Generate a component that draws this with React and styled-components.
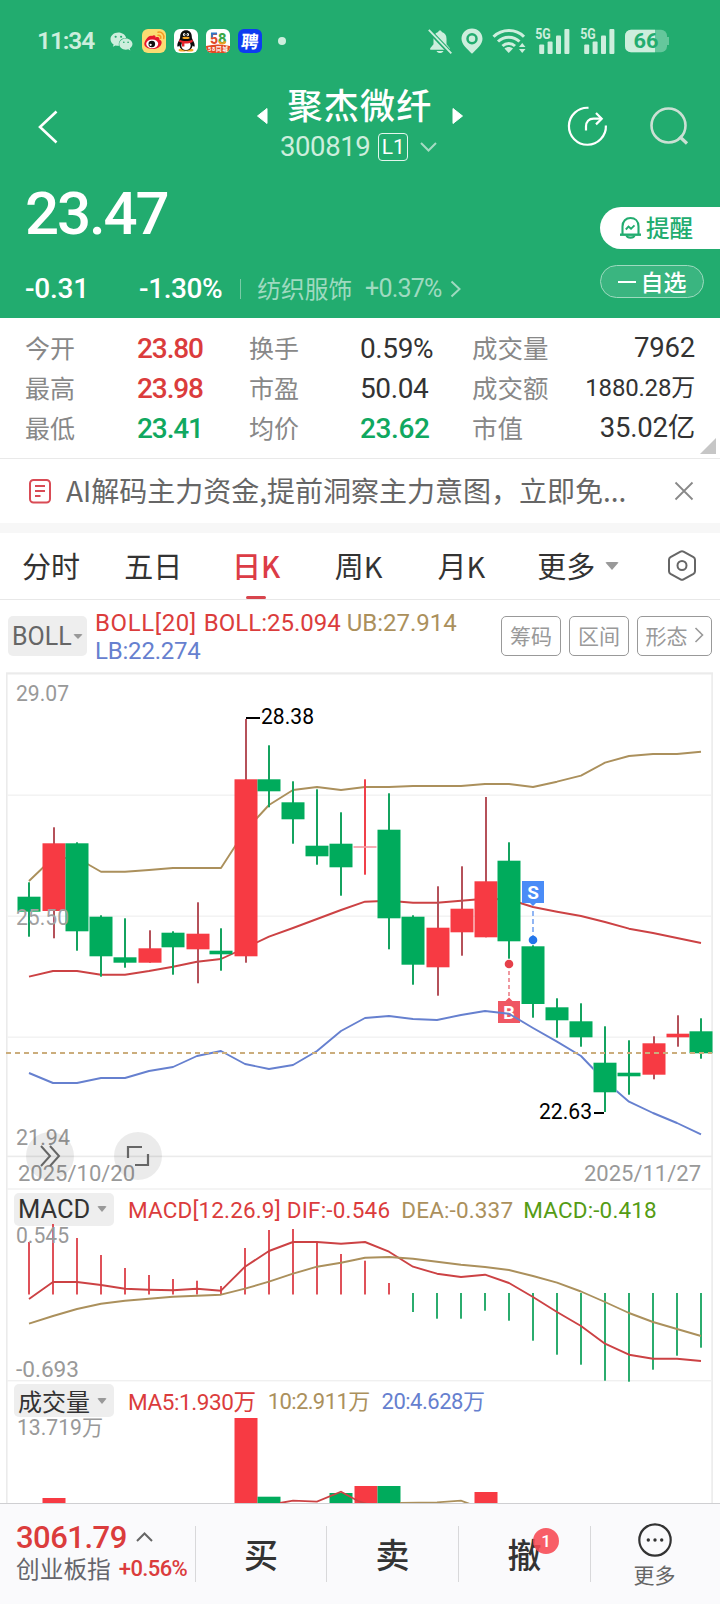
import React from 'react';
import styled, { createGlobalStyle } from 'styled-components';
import { FaWeixin } from 'react-icons/fa';

const GREEN = '#22ac6f';
const UP = '#f73a43';
const DOWN = '#00ab5c';
const RED = '#db3c3c';
const GOLD = '#ab905c';
const BLUE = '#6680cf';
const FONT = 'Roboto, "Noto Sans CJK SC", sans-serif';
const CJK = '"Noto Sans CJK SC", sans-serif';

const GlobalStyle = createGlobalStyle`
    * {
        box-sizing: border-box;
    }
    body {
        margin: 0;
        background: #fff;
        font-family: ${FONT};
        color: #333;
    }
    svg {
        display: block;
        flex: none;
    }
`;

const Screen = styled.div`
    width: 720px;
    height: 1604px;
    display: flex;
    flex-direction: column;
    overflow: hidden;
`;

const Text = styled.span`
    font-size: ${props => props.size}px;
    font-weight: ${props => props.weight || 400};
    color: ${props => props.color || 'inherit'};
    letter-spacing: ${props => props.spacing || 0}px;
    margin-left: ${props => props.left || 0}px;
    padding-top: ${props => props.drop || 0}px;
    font-family: ${props => (props.cjk ? CJK : 'inherit')};
    line-height: 1;
    white-space: pre;
`;

/* ---------- header ---------- */

const Header = styled.header`
    height: 318px;
    flex: none;
    background: ${GREEN};
    color: #fff;
`;

const StatusBar = styled.div`
    height: 82px;
    padding: 0 51px 0 37px;
    display: flex;
    align-items: center;
    justify-content: space-between;
    color: #cdeedd;
`;

const StatusGroup = styled.div`
    display: flex;
    align-items: center;
    gap: ${props => props.gap}px;
`;

const WechatIcon = styled(FaWeixin)`
    margin: 0 1px 0 8px;
`;

const AppIcon = styled.div`
    width: 24px;
    height: 24px;
    border-radius: 6px;
    overflow: hidden;
    background: ${props => props.bg};
`;

const Dot = styled.div`
    width: 8px;
    height: 8px;
    border-radius: 50%;
    background: #cdeedd;
    margin-left: 8px;
`;

const TitleBar = styled.div`
    height: 84px;
    display: grid;
    grid-template-columns: 240px 1fr 240px;
    align-items: center;
`;

const BackButton = styled.div`
    padding: 6px 0 0 37px;
`;

const StockTitle = styled.div`
    display: flex;
    flex-direction: column;
`;

const StockName = styled.div`
    height: 46px;
    display: flex;
    align-items: flex-start;
    justify-content: space-between;
    padding: 0 16px;

    svg {
        margin-top: 23px;
    }
`;

const StockCode = styled.div`
    height: 34px;
    display: flex;
    align-items: center;
    padding-left: 40px;
`;

const LevelTag = styled.div`
    width: 30px;
    height: 28px;
    margin: 0 12px 0 8px;
    border: 1.5px solid #e4f6ed;
    border-radius: 4px;
    display: flex;
    align-items: center;
    justify-content: center;
`;

const HeaderActions = styled.div`
    display: flex;
    gap: 42px;
    padding: 4px 0 0 86px;
`;

const Quote = styled.div`
    height: 152px;
    display: grid;
    grid-template-columns: 1fr 120px;
`;

const Price = styled.div`
    height: 95px;
    padding-left: 25px;
    display: flex;
    align-items: center;
`;

const Change = styled.div`
    height: 55px;
    padding-left: 25px;
    display: flex;
    align-items: center;
`;

const Divider = styled.div`
    width: 1px;
    height: 20px;
    margin: 0 16px 0 18px;
    background: #79cba6;
`;

const Actions = styled.div`
    display: flex;
    flex-direction: column;
    padding-top: 41px;
    gap: 16px;
`;

const RemindButton = styled.div`
    height: 42px;
    border-radius: 21px 0 0 21px;
    background: #fff;
    color: ${GREEN};
    display: flex;
    align-items: center;
    gap: 4px;
    padding-left: 19px;
`;

const WatchButton = styled.div`
    width: 104px;
    height: 33px;
    border-radius: 17px;
    border: 1.3px solid #9edabf;
    background: #3ab580;
    display: flex;
    align-items: center;
    justify-content: center;
    gap: 5px;
`;

const Minus = styled.div`
    width: 18px;
    height: 2px;
    background: #fff;
`;

/* ---------- stats and banner ---------- */

const Stats = styled.section`
    height: 141px;
    flex: none;
    position: relative;
    padding: 10px 25px 10px;
    border-bottom: 1px solid #e9e9e9;
    display: grid;
    grid-template-columns: 112px 112px 111px 112px 1fr;
    grid-auto-rows: 40px;
    align-items: center;
`;

const StatLabel = styled(Text)`
    font-family: ${CJK};
    color: #888;
    padding-bottom: 2px;
`;

const StatValue = styled(Text)`
    padding-top: 1px;
`;

const LastStat = styled.div`
    display: flex;
    align-items: center;
    justify-content: space-between;
`;

const Corner = styled.div`
    position: absolute;
    right: 4px;
    bottom: 4px;
    border-style: solid;
    border-width: 0 0 16px 16px;
    border-color: transparent transparent #c6c6c6 transparent;
`;

const Banner = styled.section`
    height: 64px;
    flex: none;
    display: flex;
    align-items: center;
    padding: 0 26px 0 28px;
`;

const BannerText = styled(Text)`
    flex: 1;
    margin-left: 14px;
    padding-bottom: 2px;
`;

const Gap = styled.div`
    height: 10px;
    flex: none;
    background: #f7f7f7;
`;

/* ---------- tabs ---------- */

const Tabs = styled.nav`
    height: 67px;
    flex: none;
    display: flex;
    border-bottom: 1.5px solid #e8e8e8;
`;

const Tab = styled.div`
    width: ${props => props.w || 102.7}px;
    flex: none;
    display: flex;
    flex-direction: column;
    align-items: center;
    color: ${props => (props.active ? '#dc3c46' : '#333')};

    &:first-child {
        width: 102px;
    }

    &::after {
        content: '';
        width: 20px;
        height: 3px;
        border-radius: 2px;
        background: ${props => (props.active ? '#d8454d' : 'transparent')};
    }
`;

const TabLabel = styled.div`
    height: 63px;
    display: flex;
    align-items: center;
    gap: 10px;
    padding-top: 2px;
`;

const Triangle = styled.div`
    border-style: solid;
    border-width: ${props => props.s * 1.15}px ${props => props.s}px 0;
    border-color: #999 transparent transparent;
    border-radius: 2px;
`;

/* ---------- indicators ---------- */

const BollBar = styled.div`
    height: 72px;
    flex: none;
    display: flex;
    align-items: center;
    padding: 0 8px 0 8px;
`;

const Chip = styled.div`
    width: ${props => props.w}px;
    height: ${props => props.h}px;
    flex: none;
    border-radius: 5px;
    background: #eee;
    display: flex;
    align-items: center;
    justify-content: space-between;
    padding: 0 ${props => props.pr}px 0 4px;
`;

const Legend = styled.div`
    flex: 1;
    margin-left: 8px;
    align-self: flex-start;
    padding-top: 9px;
`;

const LegendLine = styled.div`
    display: flex;
    align-items: center;
    height: 28px;
`;

const ToolButton = styled.div`
    height: 40px;
    width: ${props => props.w}px;
    margin-left: ${props => props.ml || 0}px;
    padding-bottom: 2px;
    border: 1px solid #999;
    border-radius: 5px;
    color: #999;
    display: flex;
    align-items: center;
    justify-content: center;
    gap: 6px;
`;

/* ---------- charts ---------- */

const Charts = styled.section`
    flex: 1;
    min-height: 0;
    overflow: hidden;
    position: relative;
`;

const DateRow = styled.div`
    height: 32px;
    display: flex;
    align-items: center;
    justify-content: space-between;
    padding: 2px 19px 0 18px;
    color: #999;
`;

const PanelHead = styled.div`
    height: ${props => props.h}px;
    display: flex;
    align-items: center;
    padding: 3px 0 0 14px;
`;

const RoundButton = styled.div`
    position: absolute;
    left: ${props => props.x}px;
    top: 460px;
    width: 48px;
    height: 48px;
    border-radius: 50%;
    background: rgba(0, 0, 0, 0.08);
    display: flex;
    align-items: center;
    justify-content: center;
`;

const Chart = styled.svg`
    overflow: visible;
    font-family: ${FONT};
`;

/* ---------- bottom bar ---------- */

const BottomBar = styled.footer`
    height: 101px;
    flex: none;
    border-top: 1px solid #cfcfd2;
    background: #fafafc;
    display: flex;
    padding-top: 16px;
`;

const IndexBox = styled.div`
    width: 195px;
    padding-left: 16px;
`;

const IndexRow = styled.div`
    display: flex;
    align-items: center;
    height: ${props => props.h}px;
`;

const TradeButton = styled.div`
    width: ${props => props.w}px;
    height: 56px;
    margin-top: 6px;
    border-left: 1.5px solid #d8d8da;
    display: flex;
    align-items: center;
    justify-content: center;
    position: relative;
`;

const Badge = styled.div`
    position: absolute;
    left: 74px;
    top: 2px;
    width: 26px;
    height: 26px;
    border-radius: 50%;
    background: rgba(247, 72, 82, 0.88);
    color: #fff;
    display: flex;
    align-items: center;
    justify-content: center;
`;

const MoreButton = styled.div`
    flex: 1;
    height: 56px;
    margin-top: 6px;
    padding-right: 2px;
    border-left: 1.5px solid #d8d8da;
    display: flex;
    flex-direction: column;
    align-items: center;
    gap: 7px;

    svg {
        margin-top: -3px;
    }
`;

/* [kind, high, body top, body bottom, low], kind 2 is an unchanged close */
const candles = [
    [0, 882.3, 896.7, 911.7, 936.7],
    [1, 827.3, 843.3, 911, 938.3],
    [0, 842.3, 843.3, 931.3, 950.7],
    [0, 915.3, 916.7, 956.3, 976.7],
    [0, 918.3, 957.3, 962.7, 967.7],
    [1, 930.3, 948.3, 962.7, 962.7],
    [0, 931.3, 932.7, 947.3, 974.7],
    [1, 902.3, 933.7, 949.3, 983.3],
    [0, 928.3, 950.7, 954.3, 970.7],
    [1, 719, 779.3, 956.3, 962.7],
    [0, 745.3, 779.3, 791.3, 807.3],
    [0, 781.3, 802.3, 819.3, 843.7],
    [0, 789.3, 845.7, 856.3, 864.7],
    [0, 812.3, 843.7, 867.3, 895.7],
    [2, 779.3, 846.2, 847.8, 874.7],
    [0, 793.3, 829.7, 918.3, 949.3],
    [0, 915.3, 916.7, 964.7, 984.7],
    [1, 886.3, 927.7, 967.3, 995.7],
    [1, 866.3, 908.7, 932.3, 955.7],
    [1, 797, 881.3, 937.3, 937.3],
    [0, 842.3, 860.7, 941.3, 958.7],
    [0, 945.3, 946.3, 1004, 1017.7],
    [0, 998.3, 1007.3, 1020.3, 1037.7],
    [0, 1003.3, 1021.3, 1037.3, 1046.7],
    [0, 1026.3, 1062.7, 1092.3, 1112],
    [0, 1040.3, 1072.7, 1076.3, 1094.7],
    [1, 1036.3, 1043.3, 1074.7, 1079.3],
    [1, 1015.3, 1033.7, 1037.3, 1046.7],
    [0, 1018.3, 1031.3, 1053.3, 1058.7]
];

const upper = [
    881, 858, 858, 871.7, 871.7, 870, 868, 868, 868, 831, 805, 790, 787, 790,
    787, 787, 786, 786, 786, 784, 784, 787, 781.7, 775.7, 762.7, 756, 754, 754,
    751.7
];
const middle = [
    976.7, 971, 971, 974.7, 974.7, 971, 966.7, 961.7, 959, 948, 936.7, 928, 919,
    910, 901.7, 900.7, 902.7, 902.7, 900.7, 898.7, 899.5, 907, 911.7, 916, 922,
    928.7, 933, 938, 943
];
const lower = [
    1073, 1083, 1083, 1078, 1078, 1071, 1067, 1056, 1051, 1064, 1069, 1065,
    1051, 1031, 1018, 1016, 1019, 1020, 1015, 1011, 1013.7, 1028, 1041.7, 1056,
    1081, 1101.7, 1113, 1123, 1134.3
];
const macdBars = [
    1242, 1224, 1238, 1255, 1268, 1275, 1279, 1280.7, 1286, 1248, 1230, 1229,
    1242, 1254, 1260.7, 1283, 1312, 1318.7, 1318.7, 1310.7, 1320.7, 1340.7,
    1354.7, 1364.7, 1380.7, 1381.7, 1369.7, 1355.7, 1347.7
];
const dif = [
    1299, 1282, 1282, 1285, 1288.7, 1289.7, 1290.3, 1288.7, 1290.7, 1266.7,
    1251, 1242, 1242, 1243.7, 1242, 1251.7, 1266.7, 1273.7, 1277, 1274.7, 1283,
    1297, 1312, 1326, 1343.7, 1354.7, 1358.7, 1358.7, 1361
];
const dea = [
    1323.7, 1316, 1309, 1303.7, 1300.7, 1298.7, 1296.7, 1295.7, 1294.7, 1288.7,
    1281.7, 1273.7, 1266.7, 1262.7, 1257.7, 1257, 1258.7, 1261.7, 1264.7, 1267,
    1270, 1276, 1282.7, 1291.5, 1302, 1313, 1322, 1329, 1336
];
/* [index, up, top] */
const volumes = [
    [1, 1, 1498],
    [9, 1, 1418],
    [10, 0, 1496.7],
    [13, 0, 1493],
    [14, 1, 1486],
    [15, 0, 1486],
    [19, 1, 1492]
];

const xAt = i => 29 + 24 * i;
const points = list => list.map((y, i) => `${xAt(i)},${y}`).join(' ');

const Line = ({ data, color, mask }) => (
    <polyline
        points={points(data)}
        fill="none"
        stroke={color}
        strokeWidth="1.9"
        strokeLinejoin="round"
        mask={mask}
    />
);

const Label = ({ x, y, w, fill = '#999', size = 22, children }) => (
    <text
        x={x}
        y={y}
        fontSize={size}
        fill={fill}
        textLength={w}
        lengthAdjust="spacingAndGlyphs"
    >
        {children}
    </text>
);

const Frame = ({ y1, y2 }) => (
    <g fill="#ebebeb">
        <rect x="6" y={y1} width="1.6" height={y2 - y1} />
        <rect x="711.3" y={y1} width="1.6" height={y2 - y1} />
    </g>
);

const CandleChart = () => (
    <Chart width="720" height="485" viewBox="0 672 720 485">
        <rect x="6" y="672.3" width="707" height="2.2" fill="#ebebeb" />
        <Frame y1={673} y2={1157} />
        {[794.5, 915.5, 1036.5].map(y => (
            <rect key={y} x="7" y={y} width="704" height="1.4" fill="#f2f2f2" />
        ))}
        <rect x="7" y="1155.6" width="705" height="1.6" fill="#ebebeb" />
        <Line data={upper} color={GOLD} />
        <Line data={middle} color="#cc4244" />
        {candles.map(([kind, high, top, bottom, low], i) => {
            const cx = xAt(i) + (kind === 1 ? 1 : 0);
            return (
                <g key={i}>
                    <rect
                        x={cx - 1}
                        y={high}
                        width="2"
                        height={low - high}
                        fill={['#14a35f', '#b5515a', '#f0404a'][kind]}
                    />
                    <rect
                        x={cx - 11.5}
                        y={top}
                        width="23"
                        height={bottom - top}
                        fill={[DOWN, UP, '#f39aa2'][kind]}
                    />
                </g>
            );
        })}
        <g fontSize="19" fontWeight="700" fill="#fff" textAnchor="middle">
            <path d="M522 881h22v22h-8l-3 3-3-3h-8z" fill="#4a8cf7" />
            <text x="533" y="899">
                S
            </text>
            <path d="M498 1001h7.5l3.5-3.5 3.5 3.5h7.5v22h-22z" fill="#ef5763" />
            <text x="509" y="1019" fontSize="18">
                B
            </text>
        </g>
        <path d="M533 911v26" stroke="#85aef3" strokeWidth="1.8" strokeDasharray="5 3" />
        <circle cx="533" cy="940" r="4.3" fill="#2476ea" />
        <path d="M509 971v26" stroke="#ee8e96" strokeWidth="1.8" strokeDasharray="4 3" />
        <circle cx="509" cy="964" r="4.3" fill="#e5404a" />
        <mask id="behindCandle" maskUnits="userSpaceOnUse" x="0" y="672" width="720" height="485">
            <rect x="0" y="672" width="720" height="485" fill="#fff" />
            <rect x="593.5" y="1062.7" width="23" height="29.6" fill="#000" />
        </mask>
        <Line data={lower} color={BLUE} mask="url(#behindCandle)" />
        <path d="M6 1053h706" stroke="#cbad7c" strokeWidth="1.8" strokeDasharray="5 4" />
        <path d="M246 718h14M594 1113h10" stroke="#000" strokeWidth="2" />
        <Label x={261} y={724} w={53} fill="#000">
            28.38
        </Label>
        <Label x={539} y={1119} w={53} fill="#000">
            22.63
        </Label>
        <Label x={16} y={701} w={53}>
            29.07
        </Label>
        <Label x={16} y={925} w={53} fill="#a0a0a0">
            25.50
        </Label>
        <Label x={16} y={1145} w={54}>
            21.94
        </Label>
    </Chart>
);

const MacdChart = () => (
    <Chart width="720" height="155" viewBox="0 1226 720 155">
        <Frame y1={1157} y2={1381} />
        <rect x="7" y="1188.3" width="704" height="1.4" fill="#f0f0f0" />
        <rect x="7" y="1380" width="704" height="1.4" fill="#f0f0f0" />
        {macdBars.map((y, i) => (
            <rect
                key={i}
                x={xAt(i) - 0.9}
                y={y < 1290 ? y : 1293}
                width="1.8"
                height={y < 1290 ? 1294.5 - y : y - 1293}
                fill={y < 1290 ? '#dc3f47' : '#14a35f'}
            />
        ))}
        <Line data={dif} color="#cc4244" />
        <Line data={dea} color={GOLD} />
        <Label x={16} y={1243} w={53}>
            0.545
        </Label>
        <Label x={16} y={1377} w={63}>
            -0.693
        </Label>
    </Chart>
);

const VolumeChart = () => (
    <Chart width="720" height="86" viewBox="0 1417 720 86">
        <Frame y1={1381} y2={1503} />
        {volumes.map(([i, up, top]) => (
            <rect
                key={i}
                x={xAt(i) + up - 11.5}
                y={top}
                width="23"
                height={1503 - top}
                fill={up ? UP : DOWN}
            />
        ))}
        <polyline
            points="280,1503 293,1500.7 317,1501.7 341,1491.7 358,1501 370,1505"
            fill="none"
            stroke="#cc4244"
            strokeWidth="1.8"
        />
        <polyline
            points="400,1503 437,1502.3 461,1500.7 470,1504"
            fill="none"
            stroke={GOLD}
            strokeWidth="1.8"
        />
        <Label x={17} y={1435} w={86}>
            13.719万
        </Label>
    </Chart>
);

/* ---------- icons ---------- */

const Weibo = () => (
    <svg width="24" height="24" viewBox="0 0 24 24">
        <path d="M10 7c2-1.5 3.8-.8 3.5 1.4 3-1 4.5.2 3.8 2 2 .8 2.7 2 2.2 4C18.700 18 14.500 20 10.500 20 6 20 2.300 18 2.300 14.800 2.300 11.500 7.500 5 10 7z" fill="#e6162d" />
        <ellipse cx="10.2" cy="14.8" rx="6" ry="4.4" fill="#fff" />
        <circle cx="9.8" cy="15" r="3.3" fill="#111" />
        <circle cx="8.6" cy="15.8" r="1.1" fill="#fff" />
        <path d="M16 3.200c4-.6 6.700 2.500 5.700 6.300M16 6.200c2-.3 3.200 1.200 2.700 3" fill="none" stroke="#f59a23" strokeWidth="1.5" strokeLinecap="round" />
    </svg>
);

const Penguin = () => (
    <svg width="24" height="24" viewBox="0 0 24 24">
        <ellipse cx="8.5" cy="21" rx="4" ry="1.6" fill="#f5a623" />
        <ellipse cx="15.5" cy="21" rx="4" ry="1.6" fill="#f5a623" />
        <path d="M12 1.200c3.500 0 5.800 2.500 5.800 6.300 0 1.500.4 2.300 1 3.500 1.300 2.300 2.200 4.500 1.800 6.300-.5.800-1.300 0-2-.8C18 20 15.500 21.500 12 21.500S6 20 5.400 16.500c-.7.800-1.500 1.600-2 .8C3 15.500 3.900 13.300 5.200 11c.6-1.200 1-2 1-3.500 0-3.800 2.300-6.300 5.800-6.300z" fill="#0c0c0c" />
        <path d="M12 12.500c3 0 4.700 1.500 4.700 4s-1.700 4.500-4.700 4.500-4.700-2-4.700-4.500 1.700-4 4.700-4z" fill="#fff" />
        <ellipse cx="10.2" cy="5.6" rx="1.2" ry="1.7" fill="#fff" />
        <ellipse cx="13.8" cy="5.6" rx="1.2" ry="1.7" fill="#fff" />
        <circle cx="10.5" cy="5.8" r=".5" />
        <circle cx="13.5" cy="5.8" r=".5" />
        <ellipse cx="12" cy="8.9" rx="3.6" ry="1.1" fill="#f5a623" />
        <path d="M5.300 10.500c4 2 9.400 2 13.400 0v2.400c-3 1.400-6 1.700-8.300 1.500v3H8v-3.600c-1-.2-2-.5-2.900-1z" fill="#e5232c" />
    </svg>
);

const FiftyEight = () => (
    <svg width="24" height="24" viewBox="0 0 24 24">
        <g fontFamily="Inter, sans-serif" fontWeight="800" fontSize="15">
            <text x="4" y="14.5" fill="#e04a2b" textLength="8" lengthAdjust="spacingAndGlyphs">
                5
            </text>
            <text x="12" y="14.5" fill="#3aa84a" textLength="8.5" lengthAdjust="spacingAndGlyphs">
                8
            </text>
        </g>
        <path d="M5 4.500h6M6 4.500v4" stroke="#2f78c8" strokeWidth="1.8" fill="none" />
        <path d="M13.500 12.300a2.800 2.300 0 0 0 5.600 0" stroke="#f0a020" strokeWidth="2" fill="none" />
        <path d="M0 17q12-3 24 0v7H0z" fill="#e24a22" />
        <text x="2" y="22.3" fontSize="5.5" fontWeight="700" fill="#fff" textLength="20">
            58同城
        </text>
    </svg>
);

const Recruit = () => (
    <svg width="24" height="24" viewBox="0 0 24 24">
        <text
            x="4.5"
            y="18.5"
            fontSize="17.5"
            fontWeight="700"
            fontFamily={CJK}
            fill="#fff"
            transform="skewX(-6)"
        >
            聘
        </text>
    </svg>
);

const BellOff = () => (
    <svg width="24" height="25" viewBox="0 0 24 25" fill="#cdeedd">
        <path d="M12 1.500c1 0 1.700.6 1.800 1.500 3.200.8 4.700 3.400 4.700 6.700v5.500l3.300 4v1.600H2.200v-1.600l3.300-4V9.700C5.500 6.400 7 3.800 10.200 3c.1-.9.800-1.500 1.800-1.500z" />
        <path d="M8.500 22h7c-.8 1.500-2 2-3.500 2s-2.700-.5-3.500-2z" />
        <path d="M1 1.500l22 23" stroke={GREEN} strokeWidth="4.5" />
        <path d="M.8.800l22.500 23.500" stroke="#cdeedd" strokeWidth="1.9" />
    </svg>
);

const Pin = () => (
    <svg width="22" height="26" viewBox="0 0 22 26">
        <path d="M11 .5C17 .5 21.500 5 21.500 10.800c0 5.700-5.500 10-10.500 15-5-5-10.500-9.300-10.500-15C.5 5 5 .5 11 .5z" fill="#cdeedd" />
        <circle cx="11" cy="10.7" r="4.5" fill="none" stroke={GREEN} strokeWidth="2.5" />
    </svg>
);

const Wifi = () => (
    <svg width="35" height="26" viewBox="0 0 35 26">
        <g fill="none" stroke="#cdeedd" strokeWidth="3">
            <path d="M1.500 8.800C10 .5 24 .5 32 8.800" />
            <path d="M6 13.500c6-5.700 15.500-5.700 21.500 0" />
            <path d="M10.500 18c3.500-3.300 9-3.300 12.500 0" />
        </g>
        <path d="M12.500 20.500c2.500-2 6-2 8.500 0L16.700 25z" fill="#cdeedd" />
        <path d="M27 19h6.500L30.200 15zM27 21h6.500l-3.300 4z" fill="#cdeedd" />
    </svg>
);

const SignalSvg = styled.svg`
    overflow: visible;
    fill: #cdeedd;
`;

const Signal = () => (
    <SignalSvg width="35" height="26" viewBox="0 0 35 26">
        <rect x="3.2" y="16.5" width="5" height="9.5" rx="1" />
        <rect x="11.6" y="13.5" width="5" height="12.5" rx="1" />
        <rect x="20" y="7.5" width="5" height="18.5" rx="1" />
        <rect x="28.4" y="1" width="5" height="25" rx="1" />
        <text x="-0.8" y="11" fontSize="14" fontWeight="700" textLength="15.5" lengthAdjust="spacingAndGlyphs">
            5G
        </text>
    </SignalSvg>
);

const Battery = () => (
    <svg width="44" height="24" viewBox="0 0 44 24">
        <rect x="0" y=".7" width="42" height="22.6" rx="6" fill="#65c79c" />
        <path d="M6 .7h24v22.600H6a6 6 0 0 1-6-6V6.700a6 6 0 0 1 6-6z" fill="#cdeedd" />
        <rect x="42" y="8" width="2" height="8" fill="#65c79c" />
        <text x="8.5" y="19" fontSize="19.5" fontWeight="700" fill={GREEN} textLength="25" lengthAdjust="spacingAndGlyphs">
            66
        </text>
    </svg>
);

const ArrowSvg = styled.svg`
    margin-left: ${props => props.$left}px;
`;

const Arrow = ({ w, h, d, color, stroke = 2, left = 0, fill = 'none' }) => (
    <ArrowSvg width={w} height={h} viewBox={`0 0 ${w} ${h}`} fill={fill} $left={left}>
        <path d={d} stroke={color} strokeWidth={stroke} />
    </ArrowSvg>
);

const ShareIcon = () => (
    <svg width="42" height="42" viewBox="0 0 42 42" fill="none" stroke="#fff" strokeWidth="2.2">
        <path d="M22.500 2.800a18.500 18.500 0 1 0 17.400 17.700" />
        <path d="M20 25.500v-4c0-5 3-7.800 7.500-7.800h8" />
        <path d="M30 8l5.700 5.700-5.700 5.700" />
    </svg>
);

const SearchIcon = () => (
    <svg width="40" height="42" viewBox="0 0 40 42" fill="none" stroke="#cbe0d4" strokeWidth="2.6">
        <circle cx="18.5" cy="20.5" r="17" />
        <path d="M29.500 31.500l7.500 7" strokeWidth="3.2" />
    </svg>
);

const BellIcon = () => (
    <svg width="23" height="24" viewBox="0 0 23 24" fill="none" stroke={GREEN} strokeWidth="2.1">
        <path d="M3.500 18.500v-8C3.500 5 7 2 11.500 2s8 3 8 8.500v8" />
        <path d="M1 18.700h21" strokeWidth="2.4" />
        <path d="M7.500 19.500c.8 2.800 7.200 2.800 8 0" />
        <path d="M6.800 13.500l2.700-3 2.500 2.300 3.500-3.500" strokeWidth="1.9" />
    </svg>
);

const NoteIcon = () => (
    <svg width="24" height="26" viewBox="0 0 24 26" fill="none" stroke="#d94b55">
        <rect x="2" y="2" width="20" height="22.5" rx="3.5" strokeWidth="2" />
        <path d="M7 8h10M7 13h10M7 18h5.500" strokeWidth="1.8" />
    </svg>
);

const HexIcon = () => (
    <svg width="30" height="34" viewBox="0 0 30 34" fill="none" stroke="#666" strokeWidth="2">
        <path d="M13.500 2.700q1.500-.8 3 0l10 5.500q1.500.9 1.500 2.600v11.400q0 1.700-1.500 2.600l-10 5.500q-1.500.8-3 0l-10-5.500Q2 23.900 2 22.200V10.800q0-1.700 1.500-2.600z" />
        <circle cx="15" cy="16.5" r="4.5" />
    </svg>
);

const MoreIcon = () => (
    <svg width="34" height="34" viewBox="0 0 34 34">
        <circle cx="17" cy="17" r="15.7" fill="none" stroke="#333" strokeWidth="2.2" />
        <g fill="#333">
            <circle cx="10.3" cy="17" r="1.7" />
            <circle cx="17" cy="17" r="1.7" />
            <circle cx="23.7" cy="17" r="1.7" />
        </g>
    </svg>
);

const stats = [
    ['今开', '23.80', RED, '换手', '0.59%', '#333', '成交量', '7962'],
    ['最高', '23.98', RED, '市盈', '50.04', '#333', '成交额', '1880.28万'],
    ['最低', '23.41', '#10a860', '均价', '23.62', '#10a860', '市值', '35.02亿']
];

const App = () => (
    <Screen>
        <GlobalStyle />
        <Header>
            <StatusBar>
                <StatusGroup gap={8}>
                    <Text size={24.5} weight={600} spacing={-1.1}>
                        11:34
                    </Text>
                    <WechatIcon size={23} />
                    <AppIcon bg="#fbdc72">
                        <Weibo />
                    </AppIcon>
                    <AppIcon bg="#fff">
                        <Penguin />
                    </AppIcon>
                    <AppIcon bg="#fff">
                        <FiftyEight />
                    </AppIcon>
                    <AppIcon bg="#0d3cf0">
                        <Recruit />
                    </AppIcon>
                    <Dot />
                </StatusGroup>
                <StatusGroup gap={9.3}>
                    <BellOff />
                    <Pin />
                    <Wifi />
                    <Signal />
                    <Signal />
                    <Battery />
                </StatusGroup>
            </StatusBar>
            <TitleBar>
                <BackButton>
                    <Arrow w={22} h={34} d="M19.500 1.500L3 17l16.500 15.500" color="#fff" stroke={2.6} />
                </BackButton>
                <StockTitle>
                    <StockName>
                        <Arrow w={12} h={18} d="M11 1.500v15L1.500 9z" color="#fff" stroke={1} fill="#fff" />
                        <Text size={35} weight={500} spacing={1.2} drop={2} cjk>
                            聚杰微纤
                        </Text>
                        <Arrow w={12} h={18} d="M1 1.500v15L10.500 9z" color="#fff" stroke={1} fill="#fff" />
                    </StockName>
                    <StockCode>
                        <Text size={27.5} color="#cdeedd" spacing={-0.4}>
                            300819
                        </Text>
                        <LevelTag>
                            <Text size={21}>L1</Text>
                        </LevelTag>
                        <Arrow w={17} h={10} d="M1 1l7.500 7.500L16 1" color="#a5dcc3" />
                    </StockCode>
                </StockTitle>
                <HeaderActions>
                    <ShareIcon />
                    <SearchIcon />
                </HeaderActions>
            </TitleBar>
            <Quote>
                <div>
                    <Price>
                        <Text size={60} weight={500} spacing={-2.1}>
                            23.47
                        </Text>
                    </Price>
                    <Change>
                        <Text size={28} weight={500} spacing={-0.2}>
                            -0.31
                        </Text>
                        <Text size={28} weight={500} spacing={-0.4} left={50}>
                            -1.30%
                        </Text>
                        <Divider />
                        <Text size={23.7} color="#9fdac0" cjk>
                            纺织服饰
                        </Text>
                        <Text size={25} color="#9fdac0" spacing={-0.8} left={13}>
                            +0.37%
                        </Text>
                        <Arrow w={12} h={18} left={8} d="M1.500 1.500L9.500 9l-8 7.500" color="#9fdac0" />
                    </Change>
                </div>
                <Actions>
                    <RemindButton>
                        <BellIcon />
                        <Text size={23.5} weight={500} cjk>
                            提醒
                        </Text>
                    </RemindButton>
                    <WatchButton>
                        <Minus />
                        <Text size={23} weight={500} cjk>
                            自选
                        </Text>
                    </WatchButton>
                </Actions>
            </Quote>
        </Header>

        <Stats>
            {stats.map(([l1, v1, c1, l2, v2, c2, l3, v3]) => (
                <React.Fragment key={l1}>
                    <StatLabel size={25}>{l1}</StatLabel>
                    <StatValue size={28} weight={500} spacing={-1.1} color={c1}>
                        {v1}
                    </StatValue>
                    <StatLabel size={25}>{l2}</StatLabel>
                    <StatValue size={28} spacing={-0.4} color={c2} weight={c2 === '#333' ? 400 : 500}>
                        {v2}
                    </StatValue>
                    <LastStat>
                        <StatLabel size={25.5}>{l3}</StatLabel>
                        <Text size={v3.length > 7 ? 24 : 27.5} spacing={-0.2}>
                            {v3}
                        </Text>
                    </LastStat>
                </React.Fragment>
            ))}
            <Corner />
        </Stats>

        <Banner>
            <NoteIcon />
            <BannerText size={28} color="#666" cjk>
                AI解码主力资金,提前洞察主力意图，立即免...
            </BannerText>
            <Arrow w={20} h={20} d="M1.500 1.500l17 17M18.500 1.500l-17 17" color="#888" stroke={1.8} />
        </Banner>
        <Gap />

        <Tabs>
            {['分时', '五日', '日K', '周K', '月K'].map(name => (
                <Tab key={name} active={name === '日K' ? 1 : undefined}>
                    <TabLabel>
                        <Text size={29} weight={name === '日K' ? 500 : 400} cjk>
                            {name}
                        </Text>
                    </TabLabel>
                </Tab>
            ))}
            <Tab w={131}>
                <TabLabel>
                    <Text size={29} cjk>
                        更多
                    </Text>
                    <Triangle s={7} />
                </TabLabel>
            </Tab>
            <Tab w={76}>
                <TabLabel>
                    <HexIcon />
                </TabLabel>
            </Tab>
        </Tabs>

        <BollBar>
            <Chip w={79} h={40} pr={4}>
                <Text size={25} color="#666">
                    BOLL
                </Text>
                <Triangle s={5} />
            </Chip>
            <Legend>
                <LegendLine>
                    <Text size={24} color={RED} spacing={0.6}>
                        BOLL[20]
                    </Text>
                    <Text size={24} color={RED} left={7}>
                        BOLL:25.094
                    </Text>
                    <Text size={24} color={GOLD} left={6}>
                        UB:27.914
                    </Text>
                </LegendLine>
                <LegendLine>
                    <Text size={24} color={BLUE} spacing={-0.2}>
                        LB:22.274
                    </Text>
                </LegendLine>
            </Legend>
            <ToolButton w={60}>
                <Text size={21} cjk>
                    筹码
                </Text>
            </ToolButton>
            <ToolButton w={60} ml={8}>
                <Text size={21} cjk>
                    区间
                </Text>
            </ToolButton>
            <ToolButton w={75} ml={8}>
                <Text size={21} cjk>
                    形态
                </Text>
                <Arrow w={10} h={16} d="M1.500 1l7 7-7 7" color="#999" stroke={1.6} />
            </ToolButton>
        </BollBar>

        <Charts>
            <CandleChart />
            <DateRow>
                <Text size={22}>2025/10/20</Text>
                <Text size={22}>2025/11/27</Text>
            </DateRow>
            <PanelHead h={37}>
                <Chip w={100} h={33} pr={7}>
                    <Text size={25.5} drop={1}>
                        MACD
                    </Text>
                    <Triangle s={5.5} />
                </Chip>
                <Text size={22.5} color={RED} left={14} spacing={0.15} drop={2}>
                    MACD[12.26.9]
                </Text>
                <Text size={22.5} color={RED} left={6} spacing={0.2} drop={2}>
                    DIF:-0.546
                </Text>
                <Text size={22.5} color={GOLD} left={11} spacing={0.15} drop={2}>
                    DEA:-0.337
                </Text>
                <Text size={22.5} color="#559c14" left={10} spacing={0.15} drop={2}>
                    MACD:-0.418
                </Text>
            </PanelHead>
            <MacdChart />
            <PanelHead h={36}>
                <Chip w={100} h={33} pr={7}>
                    <Text size={24} cjk>
                        成交量
                    </Text>
                    <Triangle s={5.5} />
                </Chip>
                <Text size={22.5} color={RED} left={14} spacing={-0.4} drop={3}>
                    MA5:1.930万
                </Text>
                <Text size={22} color={GOLD} left={12} spacing={-0.6} drop={3}>
                    10:2.911万
                </Text>
                <Text size={22} color={BLUE} left={12} spacing={-0.5} drop={3}>
                    20:4.628万
                </Text>
            </PanelHead>
            <VolumeChart />
            <RoundButton x={26}>
                <Arrow w={24} h={24} d="M3 2l9 10-9 10M12 2l9 10-9 10" color="#666" />
            </RoundButton>
            <RoundButton x={114}>
                <Arrow w={24} h={24} d="M2 14V3h14M22 10v11H9" color="#666" stroke={2.2} />
            </RoundButton>
        </Charts>

        <BottomBar>
            <IndexBox>
                <IndexRow h={34}>
                    <Text size={31} weight={500} color={RED} spacing={-0.5}>
                        3061.79
                    </Text>
                    <Arrow w={17} h={10} left={9} d="M1 9l7.500-7.500L16 9" color="#666" />
                </IndexRow>
                <IndexRow h={29}>
                    <Text size={23.7} color="#66666c" cjk>
                        创业板指
                    </Text>
                    <Text size={22} weight={500} color={RED} left={8} spacing={-0.6}>
                        +0.56%
                    </Text>
                </IndexRow>
            </IndexBox>
            <TradeButton w={131}>
                <Text size={34} weight={500} cjk>
                    买
                </Text>
            </TradeButton>
            <TradeButton w={132}>
                <Text size={34} weight={500} cjk>
                    卖
                </Text>
            </TradeButton>
            <TradeButton w={132}>
                <Text size={34} weight={500} cjk>
                    撤
                </Text>
                <Badge>
                    <Text size={17} weight={500}>
                        1
                    </Text>
                </Badge>
            </TradeButton>
            <MoreButton>
                <MoreIcon />
                <Text size={21} color="#666" cjk>
                    更多
                </Text>
            </MoreButton>
        </BottomBar>
    </Screen>
);

export default App;
